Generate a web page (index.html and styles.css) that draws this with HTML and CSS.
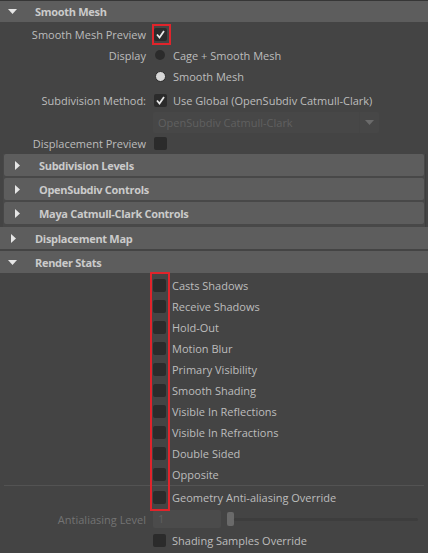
FILE: index.html
```html
<!DOCTYPE html>
<html lang="en">

<head>
  <meta charset="UTF-8">
  <meta name="viewport" content="width=device-width, initial-scale=1.0">
  <link rel="stylesheet" href="styles.css">
  <title>Smooth Mesh attributes</title>
</head>

<body>
  <div class="editor">
    <div class="frame-header first">
      <svg class="tri" width="9" height="5" viewBox="0 0 9 5"><polygon points="0,0 9,0 4.5,5" /></svg>
      <span>Smooth Mesh</span>
    </div>

    <div class="row h21 mt2">
      <span class="lbl">Smooth Mesh Preview</span>
      <div class="ctl"><span class="cb checked"><svg viewBox="0 0 13 13"><polyline points="3,6.5 5.5,9.5 10,3" /></svg></span></div>
    </div>
    <div class="row h20">
      <span class="lbl">Display</span>
      <div class="ctl"><span class="radio"></span><span class="txt">Cage + Smooth Mesh</span></div>
    </div>
    <div class="row h22">
      <span class="lbl"></span>
      <div class="ctl"><span class="radio on"></span><span class="txt">Smooth Mesh</span></div>
    </div>
    <div class="row h22 mt2">
      <span class="lbl">Subdivision Method:</span>
      <div class="ctl"><span class="cb checked"><svg viewBox="0 0 13 13"><polyline points="3,6.5 5.5,9.5 10,3" /></svg></span><span class="txt">Use Global (OpenSubdiv Catmull-Clark)</span></div>
    </div>
    <div class="row h21 mt1">
      <span class="lbl"></span>
      <div class="dropdown">
        <span class="dd-text">OpenSubdiv Catmull-Clark</span>
        <span class="dd-btn"><svg width="9" height="5" viewBox="0 0 9 5"><polygon points="0,0 9,0 4.5,5" /></svg></span>
      </div>
    </div>
    <div class="row h21">
      <span class="lbl">Displacement Preview</span>
      <div class="ctl"><span class="cb"></span></div>
    </div>

    <div class="subframes">
      <div class="frame-header sub">
        <svg class="tri-r" width="5" height="9" viewBox="0 0 5 9"><polygon points="0,0 5,4.5 0,9" /></svg>
        <span>Subdivision Levels</span>
      </div>
      <div class="frame-header sub">
        <svg class="tri-r" width="5" height="9" viewBox="0 0 5 9"><polygon points="0,0 5,4.5 0,9" /></svg>
        <span>OpenSubdiv Controls</span>
      </div>
      <div class="frame-header sub">
        <svg class="tri-r" width="5" height="9" viewBox="0 0 5 9"><polygon points="0,0 5,4.5 0,9" /></svg>
        <span>Maya Catmull-Clark Controls</span>
      </div>
    </div>

    <div class="frame-header">
      <svg class="tri-r" width="5" height="9" viewBox="0 0 5 9"><polygon points="0,0 5,4.5 0,9" /></svg>
      <span>Displacement Map</span>
    </div>
    <div class="frame-header mt2">
      <svg class="tri" width="9" height="5" viewBox="0 0 9 5"><polygon points="0,0 9,0 4.5,5" /></svg>
      <span>Render Stats</span>
    </div>

    <div class="stats">
      <div class="row h21 mt2"><span class="lbl"></span><div class="ctl"><span class="cb"></span><span class="txt">Casts Shadows</span></div></div>
      <div class="row h21"><span class="lbl"></span><div class="ctl"><span class="cb"></span><span class="txt">Receive Shadows</span></div></div>
      <div class="row h21"><span class="lbl"></span><div class="ctl"><span class="cb"></span><span class="txt">Hold-Out</span></div></div>
      <div class="row h21"><span class="lbl"></span><div class="ctl"><span class="cb"></span><span class="txt">Motion Blur</span></div></div>
      <div class="row h21"><span class="lbl"></span><div class="ctl"><span class="cb"></span><span class="txt">Primary Visibility</span></div></div>
      <div class="row h21"><span class="lbl"></span><div class="ctl"><span class="cb"></span><span class="txt">Smooth Shading</span></div></div>
      <div class="row h21"><span class="lbl"></span><div class="ctl"><span class="cb"></span><span class="txt">Visible In Reflections</span></div></div>
      <div class="row h21"><span class="lbl"></span><div class="ctl"><span class="cb"></span><span class="txt">Visible In Refractions</span></div></div>
      <div class="row h21"><span class="lbl"></span><div class="ctl"><span class="cb"></span><span class="txt">Double Sided</span></div></div>
      <div class="row h21"><span class="lbl"></span><div class="ctl"><span class="cb"></span><span class="txt">Opposite</span></div></div>
      <div class="separator"></div>
      <div class="row h21 mt1"><span class="lbl"></span><div class="ctl"><span class="cb"></span><span class="txt">Geometry Anti-aliasing Override</span></div></div>
      <div class="row h22">
        <span class="lbl dim">Antialiasing Level</span>
        <div class="ctl">
          <span class="field">1</span>
          <div class="slider"><span class="handle"></span><span class="track"></span></div>
        </div>
      </div>
      <div class="row h21"><span class="lbl"></span><div class="ctl"><span class="cb"></span><span class="txt">Shading Samples Override</span></div></div>
    </div>

    <div class="highlight hl-preview"></div>
    <div class="highlight hl-stats"></div>
  </div>
</body>

</html>
```

FILE: styles.css
```css
body {
  margin: 0;
  font-family: "Open Sans", "DejaVu Sans", sans-serif;
  font-size: 11px;
  color: #bdbdbd;
  background: #444444;
}

.editor {
  position: relative;
  width: 428px;
  height: 553px;
  overflow: hidden;
  border-top: 1px solid #363636;
  box-sizing: border-box;
}

.frame-header {
  display: flex;
  align-items: center;
  height: 22px;
  background: #5d5d5d;
  font-weight: bold;
  letter-spacing: -0.3px;
  color: #cbcbcb;
}

.frame-header.first {
  height: 21px;
}

.frame-header .tri {
  fill: #e6e6e6;
  margin-left: 8px;
  margin-right: 18px;
}

.frame-header .tri-r {
  fill: #e6e6e6;
  margin-left: 11px;
  margin-right: 19px;
}

.subframes {
  display: flex;
  flex-direction: column;
  gap: 2px;
  margin: 0 2px 0 3px;
  padding: 0 0 3px 1px;
  background: #484848;
  border-right: 1px solid #3e3e3e;
}

.frame-header.sub {
  border-radius: 2px;
  margin-right: 1px;
}

.frame-header.sub .tri-r {
  margin-left: 11px;
  margin-right: 19px;
}

.row {
  display: grid;
  grid-template-columns: 146px 1fr;
  column-gap: 7px;
  align-items: center;
}

.h20 { height: 20px; }
.h21 { height: 21px; }
.h22 { height: 22px; }
.mt1 { margin-top: 1px; }
.mt2 { margin-top: 2px; }

.lbl {
  text-align: right;
  white-space: nowrap;
}

.lbl.dim {
  color: #737373;
}

.ctl {
  display: flex;
  align-items: center;
  gap: 6px;
  white-space: nowrap;
}

.cb {
  display: block;
  width: 13px;
  height: 13px;
  border-radius: 2px;
  background: #2b2b2b;
  flex: none;
}

.cb svg {
  display: block;
  width: 13px;
  height: 13px;
  fill: none;
  stroke: #e8e8e8;
  stroke-width: 1.8;
}

.row .ctl .cb {
  margin-left: 1px;
}

.stats .row .ctl .cb {
  margin-left: 0;
}

.radio {
  display: block;
  width: 10px;
  height: 10px;
  margin: 0 2px 0 2px;
  border-radius: 50%;
  background: #2b2b2b;
  box-sizing: border-box;
  flex: none;
}

.radio.on {
  background: #d6d6d6;
  border: 1px solid #2b2b2b;
  width: 11px;
  height: 11px;
  margin: 0 1px 0 2px;
}

.dropdown {
  display: flex;
  align-items: center;
  height: 21px;
  width: 226px;
  background: #474747;
  border-radius: 2px;
}

.dd-text {
  flex: 1;
  padding-left: 5px;
  color: #606060;
}

.dd-btn {
  display: flex;
  align-items: center;
  justify-content: center;
  width: 19px;
  height: 100%;
  border-left: 1px solid #454545;
  fill: #6b6b6b;
}

.separator {
  height: 1px;
  margin: 0 4px 0 4px;
  background: #535353;
}

.field {
  display: block;
  width: 63px;
  height: 18px;
  line-height: 18px;
  padding-left: 5px;
  border-radius: 2px;
  background: #4b4b4b;
  color: #5f5f5f;
}

.slider {
  display: flex;
  align-items: center;
  flex: 1;
  margin-right: 10px;
}

.handle {
  display: block;
  width: 7px;
  height: 14px;
  border-radius: 2px;
  background: #6a6a6a;
  flex: none;
}

.track {
  display: block;
  flex: 1;
  height: 3px;
  border-radius: 2px;
  background: #3d3d3d;
}

.highlight {
  position: absolute;
  border: 2px solid #e0242b;
  box-sizing: border-box;
  pointer-events: none;
}

.hl-preview {
  left: 152px;
  top: 23px;
  width: 19px;
  height: 21px;
}

.hl-stats {
  left: 150px;
  top: 271px;
  width: 20px;
  height: 239px;
}
```
